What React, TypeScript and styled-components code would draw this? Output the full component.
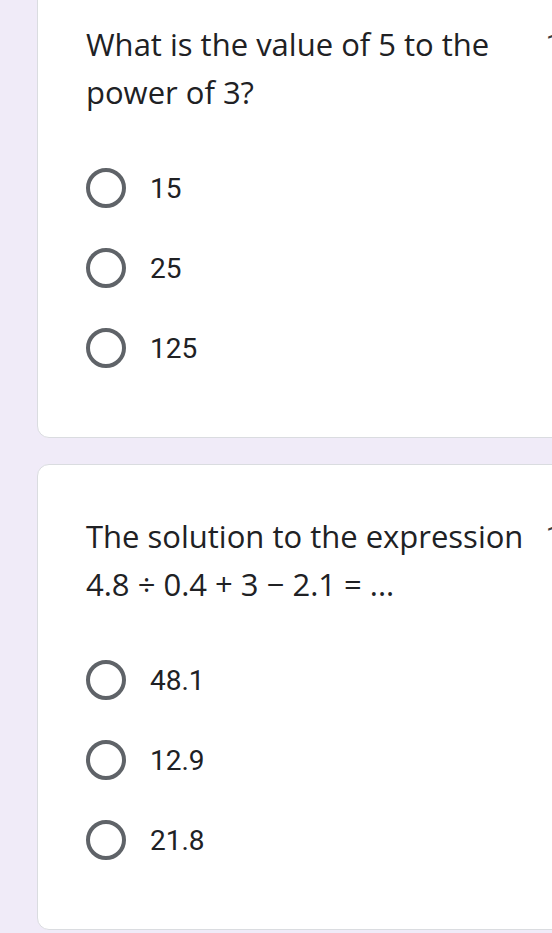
import React from "react";
import styled, { createGlobalStyle } from "styled-components";

const Global = createGlobalStyle`
  html, body { margin: 0; padding: 0; background: #f0ebf8; overflow: hidden; }
  body { font-family: Roboto, "Liberation Sans", Arial, sans-serif; }
`;

const Page = styled.div`
  display: flex;
  flex-direction: column;
  gap: 26px;
  padding-left: 37px;
  margin-top: -28px;
  width: 700px;
`;

const Card = styled.section`
  background: #ffffff;
  border: 1px solid #dadce0;
  border-radius: 12px;
  padding: 47px 0 49px 48px;
  display: flex;
  flex-direction: column;
  gap: 32px;
`;

const Header = styled.div`
  display: flex;
  align-items: flex-start;
`;

const Title = styled.div`
  width: 448px;
  font-family: "Open Sans", Roboto, "Liberation Sans", sans-serif;
  font-size: 31px;
  line-height: 48px;
  color: #202124;
`;

const Points = styled.div`
  margin-left: 12px;
  font-size: 26px;
  line-height: 48px;
  color: #3c4043;
  white-space: nowrap;
`;

const Options = styled.div`
  display: flex;
  flex-direction: column;
`;

const Option = styled.label`
  display: flex;
  align-items: center;
  height: 80px;
  gap: 24px;
`;

const Radio = styled.span`
  box-sizing: border-box;
  width: 40px;
  height: 40px;
  border-radius: 50%;
  border: 4px solid #5f6368;
  flex: none;
`;

const OptionText = styled.span`
  font-size: 28px;
  color: #202124;
`;

type Q = { title: string; options: string[] };

const questions: Q[] = [
  { title: "What is the value of 5 to the power of 3?", options: ["15", "25", "125"] },
  { title: "The solution to the expression 4.8 ÷ 0.4 + 3 − 2.1 = ...", options: ["48.1", "12.9", "21.8"] },
];

export default function App() {
  return (
    <>
      <Global />
      <Page>
        {questions.map((q) => (
          <Card key={q.title}>
            <Header>
              <Title>{q.title}</Title>
              <Points>1 point</Points>
            </Header>
            <Options>
              {q.options.map((o) => (
                <Option key={o}>
                  <Radio />
                  <OptionText>{o}</OptionText>
                </Option>
              ))}
            </Options>
          </Card>
        ))}
      </Page>
    </>
  );
}
